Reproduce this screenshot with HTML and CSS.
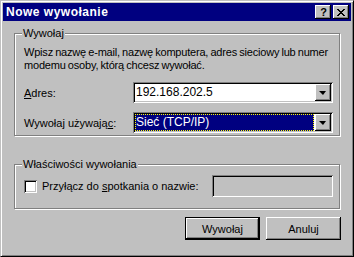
FILE: index.html
```html
<!DOCTYPE html>
<html>
<head>
<meta charset="utf-8">
<link rel="stylesheet" href="styles.css">
</head>
<body>
<div class="window">
  <div class="titlebar">
    <span class="title">Nowe wywołanie</span>
    <span class="tbtn help">?</span>
    <span class="tbtn close"><svg width="8" height="7" viewBox="0 0 8 7"><path d="M0 0h2v1h1v1h2V1h1V0h2v1H7v1H6v1H5v1h1v1h1v1h1v1H6V6H5V5H3v1H2v1H0V6h1V5h1V4h1V3H2V2H1V1H0z" fill="#000"/></svg></span>
  </div>
  <div class="content">
    <div class="group g1">
      <span class="legend">Wywołaj</span>
      <p class="desc">Wpisz nazwę e-mail, nazwę komputera, adres sieciowy lub numer<br>modemu osoby, którą chcesz wywołać.</p>
      <div class="row r1">
        <span class="label"><u>A</u>dres:</span>
        <div class="combo"><span class="value">192.168.202.5</span><span class="drop"><i class="arrow"></i></span></div>
      </div>
      <div class="row r2">
        <span class="label">Wywołaj używają<u>c</u>:</span>
        <div class="combo"><span class="value sel">Sieć (TCP/IP)</span><span class="drop"><i class="arrow"></i></span></div>
      </div>
    </div>
    <div class="group g2">
      <span class="legend">Właściwości wywołania</span>
      <div class="row r3">
        <span class="check"></span>
        <span class="clabel">Przyłącz do <u>s</u>potkania o nazwie:</span>
        <span class="field"></span>
      </div>
    </div>
    <div class="buttons">
      <span class="btn default">Wywołaj</span>
      <span class="btn">Anuluj</span>
    </div>
  </div>
</div>
</body>
</html>
```
FILE: styles.css
```css
* { box-sizing: border-box; }
html, body { margin: 0; padding: 0; background: #c0c0c0; }
body { font-family: "Liberation Sans", Arial, sans-serif; font-size: 11px; color: #000; }
.window {
  width: 354px; height: 257px;
  border: 1px solid; border-color: #c0c0c0 #000 #000 #c0c0c0;
  box-shadow: inset 1px 1px 0 #fff, inset -1px -1px 0 #808080;
  padding: 2px;
  background: #c0c0c0;
  display: flex; flex-direction: column;
}
.titlebar {
  height: 18px; background: #000080; color: #fff;
  display: flex; align-items: center; padding: 0 2px 0 3px; gap: 2px;
}
.title { font-weight: bold; font-size: 12px; flex: 1; letter-spacing: 0.5px; }
.tbtn {
  width: 16px; height: 14px; background: #c0c0c0;
  box-shadow: inset -1px -1px 0 #000, inset 1px 1px 0 #fff, inset -2px -2px 0 #808080;
  display: flex; align-items: center; justify-content: center;
  color: #000; font-weight: bold; font-size: 11px; line-height: 14px;
}
.tbtn.help { padding-left: 1px; }
.content { padding: 12px 11px 0 11px; display: flex; flex-direction: column; }
.group {
  border: 1px solid #808080;
  box-shadow: inset 1px 1px 0 #fff, 1px 1px 0 #fff;
  display: flex; flex-direction: column;
  padding: 0 6px 0 9px;
}
.legend {
  align-self: flex-start; background: #c0c0c0; line-height: 13px;
  margin: -7px 0 0 -2px; padding: 0 1px;
}
.g1 { height: 103px; }
.desc { margin: 6px 0 0 0; line-height: 13px; white-space: nowrap; letter-spacing: -0.2px; word-spacing: -0.6px; }
.row { display: flex; align-items: center; }
.r1 { margin-top: 10px; }
.r2 { margin-top: 9px; }
.label { width: 109px; }
.combo {
  width: 200px; height: 21px; background: #fff;
  box-shadow: inset 1px 1px 0 #808080, inset -1px -1px 0 #fff, inset 2px 2px 0 #000, inset -2px -2px 0 #c0c0c0;
  display: flex; align-items: center; padding: 2px;
}
.value { flex: 1; height: 17px; line-height: 17px; padding-left: 1px; font-size: 12px; }
.value.sel {
  background: #000080; color: #fff; border: 1px dotted #ffff00; line-height: 15px; padding-left: 0;
  margin-right: 1px;
}
.drop {
  width: 16px; height: 17px; background: #c0c0c0;
  box-shadow: inset -1px -1px 0 #000, inset 1px 1px 0 #fff, inset -2px -2px 0 #808080;
  display: flex; align-items: center; justify-content: center;
}
.arrow {
  width: 0; height: 0; border-left: 4px solid transparent; border-right: 3px solid transparent;
  border-top: 4px solid #000; margin-left: -1px;
}
.g2 { margin-top: 28px; height: 45px; }
.r3 { margin-top: 4px; }
.check {
  width: 13px; height: 13px; background: #fff;
  box-shadow: inset 1px 1px 0 #808080, inset -1px -1px 0 #fff, inset 2px 2px 0 #000, inset -2px -2px 0 #c0c0c0;
}
.clabel { margin-left: 5px; flex: 1; }
.field {
  width: 121px; height: 22px; background: #c0c0c0;
  box-shadow: inset 1px 1px 0 #808080, inset -1px -1px 0 #fff, inset 2px 2px 0 #000, inset -2px -2px 0 #c0c0c0;
}
.buttons { display: flex; justify-content: flex-end; gap: 6px; margin-top: 8px; margin-right: -1px; }
.btn {
  width: 75px; height: 23px; display: flex; align-items: center; justify-content: center;
  background: #c0c0c0;
  box-shadow: inset -1px -1px 0 #000, inset 1px 1px 0 #fff, inset -2px -2px 0 #808080;
}
.btn.default {
  border: 1px solid #000;
  box-shadow: inset -1px -1px 0 #000, inset 1px 1px 0 #fff, inset -2px -2px 0 #808080;
}
```
